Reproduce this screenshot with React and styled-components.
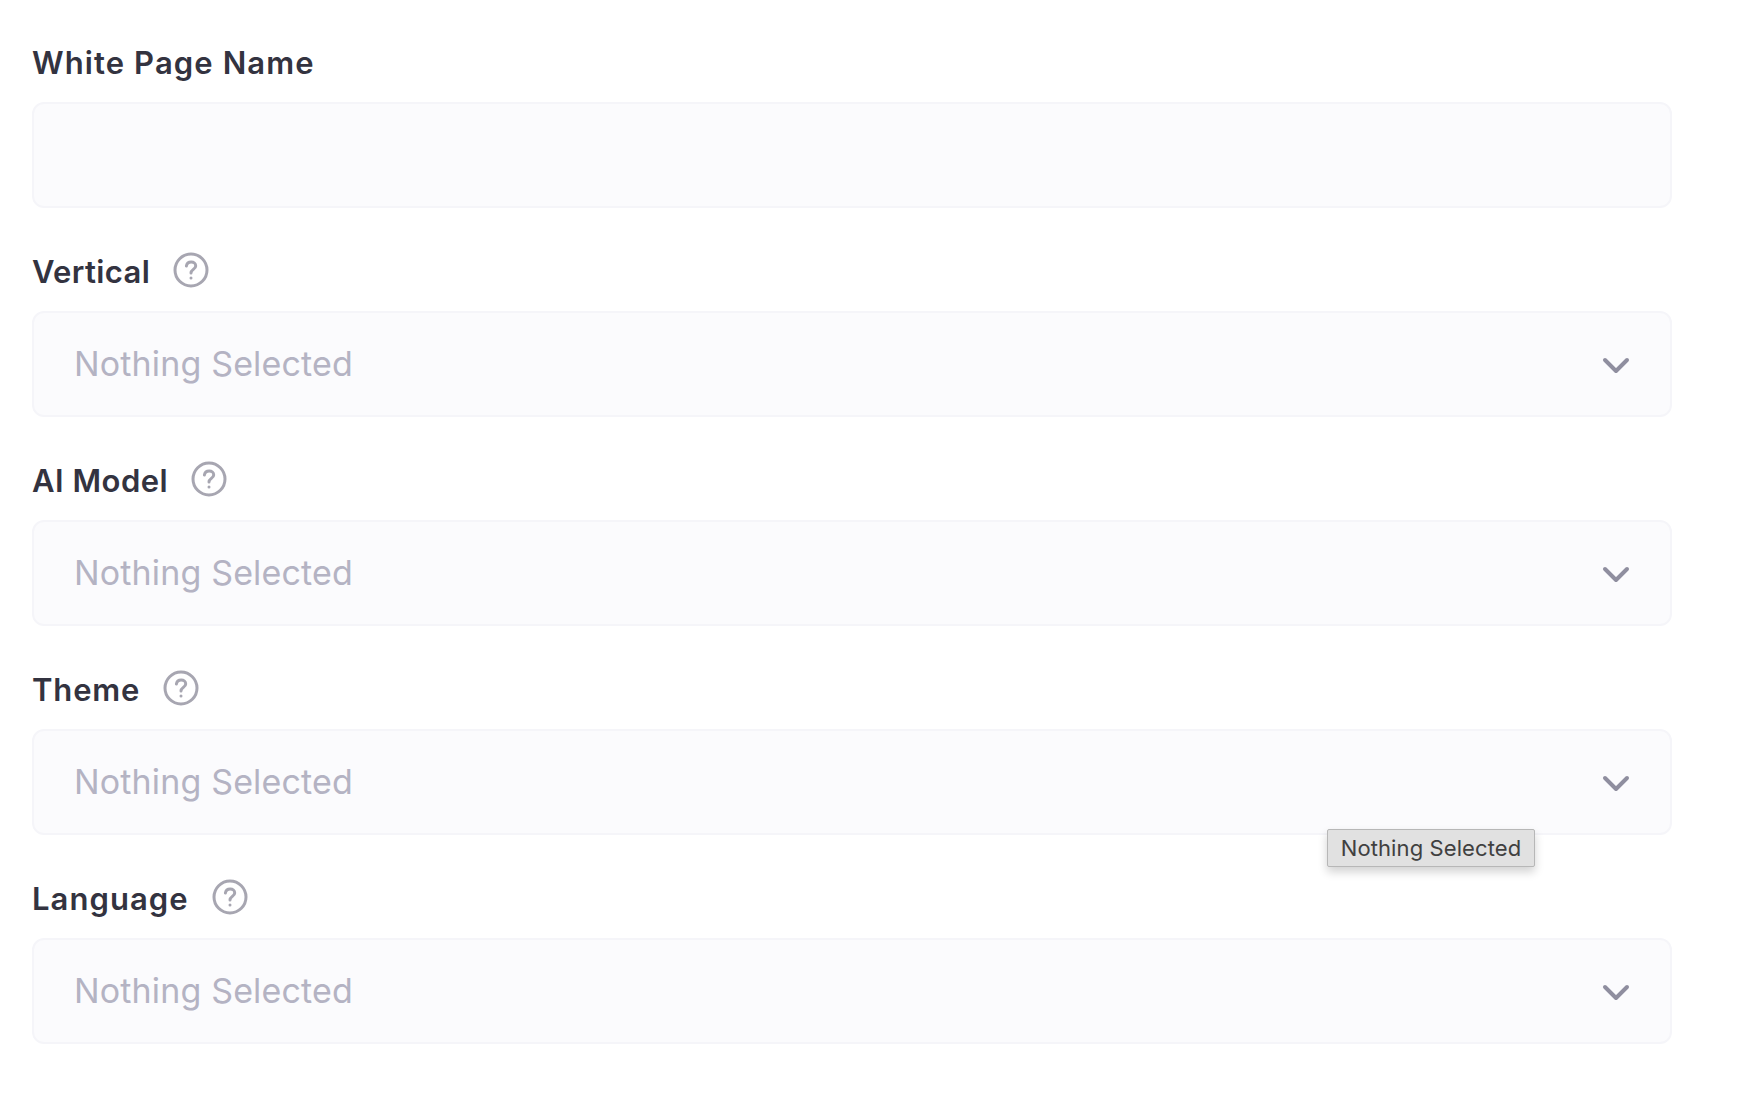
import styled, { createGlobalStyle } from "styled-components";

const GlobalStyle = createGlobalStyle`
  html, body {
    margin: 0;
    padding: 0;
    background: #fff;
  }
  body {
    font-family: Inter, "Liberation Sans", sans-serif;
  }
`;

const Form = styled.form`
  position: relative;
  display: flex;
  flex-direction: column;
  gap: 45px;
  width: 1640px;
  padding: 44px 70px 0 32px;
`;

const Field = styled.div`
  display: flex;
  flex-direction: column;
  gap: 20px;
`;

const LabelRow = styled.div`
  display: flex;
  align-items: center;
  gap: 23px;
  height: 38px;
`;

const Label = styled.label`
  font-size: 31px;
  font-weight: 600;
  letter-spacing: ${(props) => props.$spacing}px;
  line-height: 38px;
  color: #333340;
`;

const HelpIcon = styled.svg`
  width: 36px;
  height: 36px;
  flex: none;
  margin-top: -4px;
  fill: none;
  stroke: #a7a6b1;
  stroke-width: 3;
  stroke-linecap: round;
  stroke-linejoin: round;
`;

const Control = styled.div`
  box-sizing: border-box;
  display: flex;
  align-items: center;
  justify-content: space-between;
  height: 106px;
  padding: 0 39px 0 40px;
  background: #fbfbfd;
  border: 2px solid #f5f5f9;
  border-radius: 12px;
`;

const Placeholder = styled.span`
  margin-top: -2px;
  font-size: 34px;
  font-weight: 400;
  letter-spacing: 0.15px;
  color: #b4b3c3;
`;

const Chevron = styled.svg`
  width: 30px;
  height: 20px;
  margin-top: 3px;
  fill: none;
  stroke: #8f8e9f;
  stroke-width: 4;
  stroke-linecap: round;
  stroke-linejoin: round;
`;

const Tooltip = styled.div`
  position: absolute;
  left: 1327px;
  top: 829px;
  box-sizing: border-box;
  display: flex;
  align-items: center;
  justify-content: center;
  width: 208px;
  height: 38px;
  background: #e1e1e1;
  border: 1px solid #b7b7b7;
  border-radius: 2px;
  box-shadow: 0 5px 10px rgba(0, 0, 0, 0.18);
  font-size: 22px;
  letter-spacing: 0.1px;
  color: #404040;
`;

const Help = () => (
  <HelpIcon viewBox="0 0 36 36">
    <circle cx="18" cy="18" r="16" />
    <path d="M13.4 14c.4-2.6 2.4-4 4.8-4 2.6 0 4.5 1.6 4.5 3.9 0 3.4-4.7 3.6-4.7 7" />
    <path d="M18 26v.1" />
  </HelpIcon>
);

const Select = () => (
  <Control>
    <Placeholder>Nothing Selected</Placeholder>
    <Chevron viewBox="0 0 30 20">
      <path d="M4 4l11 11L26 4" />
    </Chevron>
  </Control>
);

// letter spacing per label, keeps the help icons where they sit in the design
const selects = [
  { name: "Vertical", spacing: 0.35 },
  { name: "AI Model", spacing: 0.5 },
  { name: "Theme", spacing: 0.85 },
  { name: "Language", spacing: 1.05 },
];

const App = () => (
  <>
    <GlobalStyle />
    <Form>
      <Field>
        <LabelRow>
          <Label $spacing={1.1}>White Page Name</Label>
        </LabelRow>
        <Control />
      </Field>
      {selects.map(({ name, spacing }) => (
        <Field key={name}>
          <LabelRow>
            <Label $spacing={spacing}>{name}</Label>
            <Help />
          </LabelRow>
          <Select />
        </Field>
      ))}
      <Tooltip>Nothing Selected</Tooltip>
    </Form>
  </>
);

export default App;
